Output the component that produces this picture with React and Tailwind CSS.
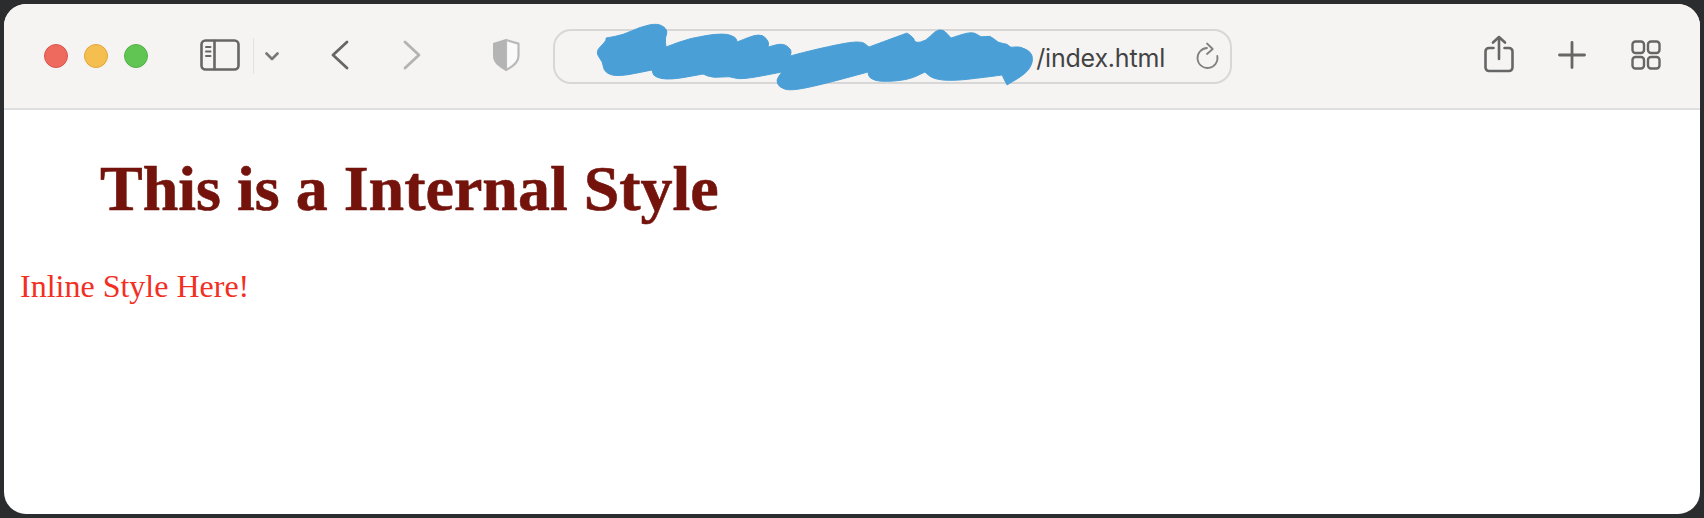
const TrafficLights = () => (
  <div className="flex items-center gap-4 mt-0.5">
    <span className="w-6 h-6 rounded-full bg-[#ee6a5f] border border-[#d9564c]" />
    <span className="w-6 h-6 rounded-full bg-[#f5bf4f] border border-[#dfa63a]" />
    <span className="w-6 h-6 rounded-full bg-[#61c554] border border-[#52b247]" />
  </div>
);

const SidebarIcon = () => (
  <svg width="40" height="32" viewBox="0 0 40 32" fill="none" stroke="#666666" strokeWidth="2.6" strokeLinecap="round">
    <rect x="1.5" y="1.5" width="37" height="29" rx="4" />
    <path d="M14.5 2v28" />
    <path d="M6 8h4.5M6 12.5h4.5M6 17h4.5" strokeWidth="2" />
  </svg>
);

const Chevron = () => (
  <svg width="14" height="9" viewBox="0 0 14 9" fill="none" stroke="#777777" strokeWidth="2.6" strokeLinecap="round" strokeLinejoin="round">
    <path d="M1.5 1.5L7 7l5.5-5.5" />
  </svg>
);

const NavArrow = ({ back, color }) => (
  <svg width="18" height="30" viewBox="0 0 18 30" fill="none" stroke={color} strokeWidth="2.8" strokeLinecap="round" strokeLinejoin="round">
    <path d={back ? "M16 2L2 15l14 13" : "M2 2l14 13L2 28"} />
  </svg>
);

const Shield = () => (
  <svg width="28" height="34" viewBox="0 0 28 34">
    <path d="M14 2l12.500 3.600V18c0 6.500-5.500 10.500-12.500 14z" fill="#fafafa" stroke="#b9b9b9" strokeWidth="2.200" strokeLinejoin="round" />
    <path d="M14 1L1 5v13c0 7 6 11 13 15V1z" fill="#b4b4b4" />
  </svg>
);

const Reload = () => (
  <svg width="24" height="28" viewBox="0 0 24 28" fill="none" stroke="#808080" strokeWidth="1.800" strokeLinecap="round" strokeLinejoin="round">
    <path d="M11 6A10 10 0 1 0 21.300 14" />
    <path d="M11 1.500L16.700 7 11 12" />
  </svg>
);

const Share = () => (
  <svg width="30" height="38" viewBox="0 0 30 38" fill="none" stroke="#666666" strokeWidth="2.600" strokeLinecap="round" strokeLinejoin="round">
    <path d="M9.500 13H5a3.500 3.500 0 0 0-3.500 3.500v16A3.500 3.500 0 0 0 5 36h20a3.500 3.500 0 0 0 3.500-3.500v-16A3.500 3.500 0 0 0 25 13h-4.500" />
    <path d="M15 24V2M9 7.500L15 2l6 5.500" />
  </svg>
);

const Plus = () => (
  <svg width="28" height="28" viewBox="0 0 28 28" fill="none" stroke="#666666" strokeWidth="2.800" strokeLinecap="round">
    <path d="M14 1.500v25M1.500 14h25" />
  </svg>
);

const TabGrid = () => (
  <svg width="30" height="30" viewBox="0 0 30 30" fill="none" stroke="#666666" strokeWidth="2.400">
    <rect x="1.500" y="1.500" width="11.500" height="11.500" rx="3" />
    <rect x="17" y="1.500" width="11.500" height="11.500" rx="3" />
    <rect x="1.500" y="17" width="11.500" height="11.500" rx="3" />
    <rect x="17" y="17" width="11.500" height="11.500" rx="3" />
  </svg>
);

// marker blob hiding the domain, points are page coordinates
const blobPoints = [
  [606, 38], [606, 38], [623, 35], [640, 27], [658, 23], [668, 30], [665, 38], [666, 47], [666, 47], [690, 38], [723, 33], [736, 37], [737, 42],
  [737, 42], [760, 33], [769, 41], [768, 47], [768, 47], [783, 43], [792, 50], [790, 56], [790, 56], [817, 49], [860, 40], [869, 47], [869, 47],
  [907, 33], [907, 33], [914, 38], [915, 43], [926, 41], [935, 31], [943, 29], [951, 38], [951, 38], [973, 31], [981, 38], [990, 35], [998, 43],
  [1008, 44], [1010, 48], [1020, 46], [1034, 54], [1030, 71], [1007, 85], [1007, 85], [1002, 75], [1002, 75], [987, 77], [953, 81], [933, 79],
  [925, 72], [925, 72], [908, 80], [880, 82], [869, 78], [868, 72], [868, 72], [820, 85], [790, 91], [779, 87], [776, 80], [782, 72], [782, 72],
  [740, 80], [730, 76], [713, 78], [703, 74], [703, 74], [670, 80], [654, 77], [652, 70], [652, 70], [617, 77], [604, 72], [603, 62], [595, 52], [606, 41],
];

const mid = (a, b) => `${(a[0] + b[0]) / 2} ${(a[1] + b[1]) / 2}`;

const blobPath =
  `M${mid(blobPoints[blobPoints.length - 1], blobPoints[0])}` +
  blobPoints
    .map((p, i) => `Q${p[0]} ${p[1]} ${mid(p, blobPoints[(i + 1) % blobPoints.length])}`)
    .join("") +
  "Z";

const Scribble = () => (
  <svg className="absolute left-0 top-0 overflow-visible" width="675" height="51">
    <g transform="translate(-555 -31)">
      <path d={blobPath} fill="#4a9fd6" stroke="#4a9fd6" strokeWidth="1" strokeLinejoin="round" />
    </g>
  </svg>
);

const AddressBar = () => (
  <div className="relative w-[679px] h-[55px] ml-[33px] mt-0.5 flex items-center justify-end pr-2.5 rounded-[18px] border-2 border-[#d8d7d7]">
    <span className="text-[25px] text-[#434343] mr-[31px] mt-[5px] font-['Inter',sans-serif] tracking-[-0.2px]">/index.html</span>
    <Reload />
    <Scribble />
  </div>
);

const App = () => {
  return (
    <div className="w-[1704px] h-[518px] bg-[#2b2c2e] p-1 overflow-hidden">
      <div className="h-full w-[1696px] bg-white rounded-[22px] overflow-hidden flex flex-col">
        <div className="h-[106px] shrink-0 flex items-center pl-10 pb-0.5 bg-[#f6f4f3] border-b-2 border-[#dfdfdf]">
          <TrafficLights />
          <div className="ml-[52px]"><SidebarIcon /></div>
          <div className="ml-[13px] mt-0.5 w-px h-9 bg-[#e2e1e1]" />
          <div className="ml-[11px] mt-0.5"><Chevron /></div>
          <div className="ml-[52px]"><NavArrow back color="#666666" /></div>
          <div className="ml-[54px]"><NavArrow color="#b3b3b3" /></div>
          <div className="ml-[71px]"><Shield /></div>
          <AddressBar />
          <div className="ml-[252px] -mt-[3px]"><Share /></div>
          <div className="ml-[44px]"><Plus /></div>
          <div className="ml-[45px]"><TabGrid /></div>
        </div>
        <div className="flex-1 font-['Liberation_Serif',serif]">
          <h1 className="ml-[96px] mt-[42px] text-[64px] leading-[74px] font-bold text-[#73130b] [-webkit-text-stroke:0.6px_#73130b]">This is a Internal Style</h1>
          <p className="ml-4 mt-[42px] text-[32px] leading-[37px] text-[#f32f24]">Inline Style Here!</p>
        </div>
      </div>
    </div>
  );
};

export default App;
